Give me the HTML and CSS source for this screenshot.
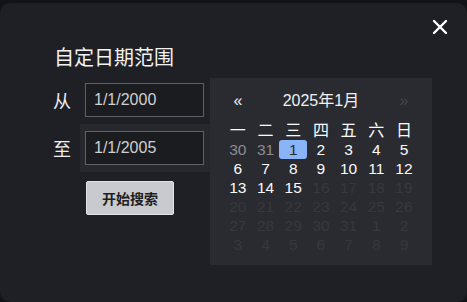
FILE: index.html
```html
<!DOCTYPE html>
<html lang="zh-CN">
<head>
    <meta charset="UTF-8">
    <title>自定日期范围</title>
    <link rel="stylesheet" href="styles.css">
</head>
<body>
    <div class="modal">
        <button class="close" aria-label="关闭">
            <svg width="16" height="16" viewBox="0 0 16 16">
                <path d="M2 2 L14 14 M14 2 L2 14" stroke="#fff" stroke-width="2.4" stroke-linecap="round"/>
            </svg>
        </button>
        <div class="title">自定日期范围</div>
        <div class="range">
            <div class="fields">
                <div class="row">
                    <span class="label">从</span>
                    <div class="field"><input type="text" value="1/1/2000"></div>
                </div>
                <div class="row">
                    <span class="label">至</span>
                    <div class="field active"><input type="text" value="1/1/2005"></div>
                </div>
                <button class="search">开始搜索</button>
            </div>
            <div class="calendar">
                <div class="cal-head">
                    <span class="nav">«</span>
                    <span class="month">2025年1月</span>
                    <span class="nav off">»</span>
                </div>
                <div class="grid">
                    <span class="wd">一</span><span class="wd">二</span><span class="wd">三</span><span class="wd">四</span><span class="wd">五</span><span class="wd">六</span><span class="wd">日</span>
                    <span class="other">30</span><span class="other">31</span><span class="sel">1</span><span>2</span><span>3</span><span>4</span><span>5</span>
                    <span>6</span><span>7</span><span>8</span><span>9</span><span>10</span><span>11</span><span>12</span>
                    <span>13</span><span>14</span><span>15</span><span class="dis">16</span><span class="dis">17</span><span class="dis">18</span><span class="dis">19</span>
                    <span class="dis">20</span><span class="dis">21</span><span class="dis">22</span><span class="dis">23</span><span class="dis">24</span><span class="dis">25</span><span class="dis">26</span>
                    <span class="dis">27</span><span class="dis">28</span><span class="dis">29</span><span class="dis">30</span><span class="dis">31</span><span class="dis">1</span><span class="dis">2</span>
                    <span class="dis">3</span><span class="dis">4</span><span class="dis">5</span><span class="dis">6</span><span class="dis">7</span><span class="dis">8</span><span class="dis">9</span>
                </div>
            </div>
        </div>
    </div>
</body>
</html>
```

FILE: styles.css
```css
body {
    margin: 0;
    padding-top: 3px;
    background: #121317;
    font-family: "Liberation Sans", "Noto Sans CJK SC", sans-serif;
    color: #fff;
}

.modal {
    position: relative;
    box-sizing: border-box;
    height: 299px;
    padding: 43px 0 0 53px;
    border-radius: 10px;
    background: #1f2025;
}

.close {
    position: absolute;
    top: 16px;
    right: 19px;
    padding: 0;
    border: none;
    background: none;
    cursor: pointer;
}

.close svg {
    display: block;
}

.title {
    margin-left: 1px;
    font-size: 20px;
    line-height: 24px;
    color: #f2f2f2;
}

.range {
    display: flex;
    margin-top: 6px;
}

.fields {
    width: 157px;
}

.row {
    display: flex;
    align-items: center;
}

.label {
    width: 27px;
    font-size: 18px;
    color: #f0f0f0;
}

.field {
    padding: 7px 6px 7px 5px;
}

.field.active {
    background: #27282d;
}

.field input {
    box-sizing: border-box;
    width: 119px;
    height: 34px;
    padding: 0 8px;
    border: 1px solid #5f6065;
    background: #1b1c20;
    color: #cfcfcf;
    font-family: inherit;
    font-size: 16px;
    outline: none;
}

.search {
    display: block;
    width: 88px;
    height: 34px;
    margin: 9px 0 0 33px;
    border: 1px solid #e2e3e6;
    border-radius: 2px;
    background: #c9cacf;
    color: #1e1f22;
    font-family: inherit;
    font-size: 14px;
    font-weight: bold;
}

.calendar {
    box-sizing: border-box;
    width: 222px;
    height: 187px;
    margin-top: 2px;
    padding: 12px 14px;
    background: #2a2b30;
}

.cal-head,
.grid {
    display: grid;
    grid-template-columns: repeat(7, 27.7px);
    text-align: center;
}

.cal-head {
    line-height: 22px;
    margin-bottom: 9px;
}

.nav {
    font-size: 16px;
    color: #f0f0f0;
}

.nav.off {
    grid-column: 7;
    color: #44454a;
}

.month {
    grid-column: 2 / 7;
    font-size: 16px;
    color: #f0f0f0;
}

.grid span {
    line-height: 19px;
    font-size: 15.5px;
    color: #fafafa;
}

.grid .wd {
    font-size: 16px;
}

.grid .other {
    color: #8b8c90;
}

.grid .dis {
    color: #37383d;
}

.grid .sel {
    border-radius: 3px;
    background: #8ab4f8;
    color: #2a2b30;
}
```
